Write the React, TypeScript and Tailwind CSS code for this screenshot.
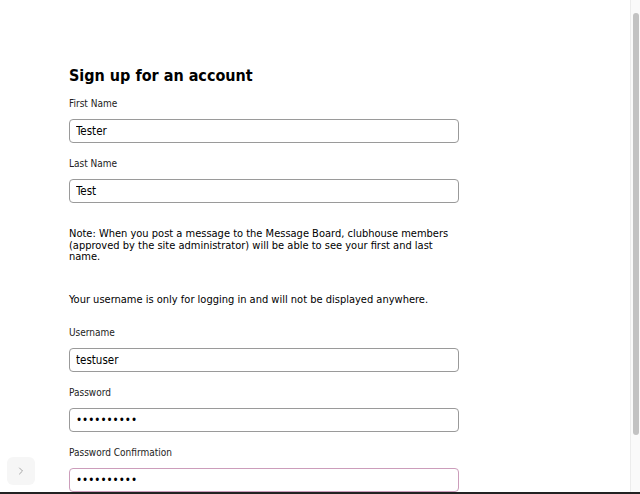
import { ChevronRight } from "lucide-react";

type Field = {
  label: string;
  value: string;
  type?: string;
  focused?: boolean;
};

const nameFields: Field[] = [
  { label: "First Name", value: "Tester" },
  { label: "Last Name", value: "Test" },
];

const accountFields: Field[] = [
  { label: "Username", value: "testuser" },
  { label: "Password", value: "secret1234", type: "password" },
  { label: "Password Confirmation", value: "secret1234", type: "password", focused: true },
];

const FormField = ({ field }: { field: Field }) => (
  <div className="flex flex-col">
    <label className="text-[10px] leading-[13px] text-[#222]">{field.label}</label>
    <input
      readOnly
      type={field.type ?? "text"}
      defaultValue={field.value}
      className={`mt-[9px] h-[24px] w-[390px] rounded-[4px] border bg-white px-[6px] text-[11.5px] text-black outline-none ${
        field.focused ? "border-[#cc9dbb]" : "border-[#9a9a9a]"
      }`}
    />
  </div>
);

export default function App() {
  return (
    <div
      className="flex h-screen flex-col bg-white"
      style={{ fontFamily: '"DejaVu Sans Condensed", "DejaVu Sans", Verdana, sans-serif' }}
    >
      <div className="relative flex flex-1 overflow-hidden">
        <div className="flex-1 pl-[69px] pt-[66px]">
          <h1 className="text-[16px] font-bold leading-[20px] text-black">Sign up for an account</h1>
          <div className="mt-[11px] flex flex-col gap-[14px]">
            {nameFields.map((f) => (
              <FormField key={f.label} field={f} />
            ))}
          </div>
          <p className="mt-[25px] w-[390px] text-[11px] leading-[11.6px] text-black">
            Note: When you post a message to the Message Board, clubhouse members (approved by the
            site administrator) will be able to see your first and last name.
          </p>
          <p className="mt-[31px] text-[11px] leading-[12px] text-black">
            Your username is only for logging in and will not be displayed anywhere.
          </p>
          <div className="mt-[20px] flex flex-col gap-[14px]">
            {accountFields.map((f) => (
              <FormField key={f.label} field={f} />
            ))}
          </div>
        </div>
        {/* scrollbar */}
        <div className="w-[10px] border-l border-[#ececec] bg-[#fafafa] pt-[13px]">
          <div className="mx-auto h-[422px] w-[6px] rounded-full bg-[#c2c2c2]" />
        </div>
        <button className="absolute bottom-[7px] left-[7px] flex h-[28px] w-[28px] items-center justify-center rounded-[6px] bg-[#f6f6f6] text-[#8a8a8a]">
          <ChevronRight size={12} strokeWidth={1.5} />
        </button>
      </div>
      <div className="h-[2px] bg-[#222]" />
    </div>
  );
}
